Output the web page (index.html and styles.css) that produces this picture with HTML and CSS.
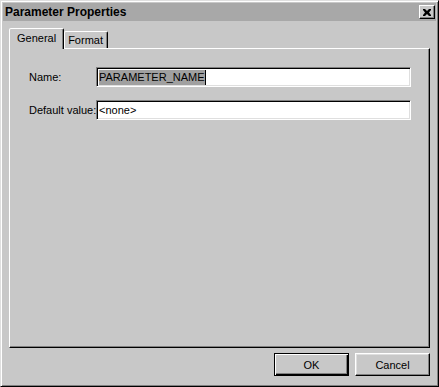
FILE: index.html
```html
<!DOCTYPE html>
<html lang="en">
<head>
    <meta charset="UTF-8">
    <link rel="stylesheet" href="styles.css">
    <title>Parameter Properties</title>
</head>
<body>
    <div class="window">
        <!-- title bar -->
        <div class="titlebar">
            <span class="title">Parameter Properties</span>
            <div class="close">
                <svg width="8" height="7" viewBox="0 0 8 7">
                    <path d="M0 0h2l2 2 2-2h2v1l-2 2.5 2 2.5v1h-2l-2-2-2 2h-2v-1l2-2.5-2-2.5z" fill="#000"/>
                </svg>
            </div>
        </div>

        <div class="content">
            <!-- tabs -->
            <div class="tabs">
                <div class="tab active">General</div>
                <div class="tab">Format</div>
            </div>

            <div class="panel">
                <div class="form">
                    <label class="lbl">Name:</label>
                    <div class="field"><span class="sel">PARAMETER_NAME</span><span class="caret"></span></div>
                    <label class="lbl">Default value:</label>
                    <div class="field">&lt;none&gt;</div>
                </div>
            </div>

            <div class="buttons">
                <div class="btn default"><span>OK</span></div>
                <div class="btn"><span>Cancel</span></div>
            </div>
        </div>
    </div>
</body>
</html>
```

FILE: styles.css
```css
body {
    margin: 0;
    font-family: "Liberation Sans", Arial, sans-serif;
    font-size: 11px;
    color: #000;
}
.window {
    width: 439px;
    height: 387px;
    box-sizing: border-box;
    padding: 2px;
    background-color: #c8c8c8;
    border: 1px solid;
    border-color: #dfdfdf #000 #000 #dfdfdf;
    box-shadow: inset 1px 1px #fff, inset -1px -1px #808080;
    display: flex;
    flex-direction: column;
}
.titlebar {
    height: 18px;
    background-color: #a8a8a8;
    display: flex;
    align-items: center;
    justify-content: space-between;
    padding: 0 1px 0 2px;
}
.title {
    font-weight: bold;
    font-size: 12px;
}
.close {
    width: 16px;
    height: 14px;
    box-sizing: border-box;
    background-color: #c8c8c8;
    border: 1px solid;
    border-color: #fff #000 #000 #fff;
    box-shadow: inset -1px -1px #808080;
    display: flex;
    align-items: center;
    justify-content: center;
}
.content {
    flex: 1;
    display: flex;
    flex-direction: column;
    padding: 7px 6px 0 6px;
}
.tabs {
    height: 20px;
    display: flex;
    align-items: flex-end;
}
.tab {
    height: 17px;
    box-sizing: border-box;
    padding: 1px 4px 0 3px;
    border: 1px solid;
    border-bottom: none;
    border-color: #fff #000 transparent #fff;
    border-radius: 2px 2px 0 0;
    box-shadow: inset -1px 0 #808080;
    line-height: 14px;
}
.tab.active {
    height: 21px;
    margin-bottom: -1px;
    padding: 2px 7px 0 7px;
    background-color: #c8c8c8;
    position: relative;
    z-index: 1;
}
.panel {
    flex: 1;
    border: 1px solid;
    border-color: #fff #000 #000 #fff;
    box-shadow: inset -1px -1px #808080;
    padding: 18px 18px 0 19px;
}
.form {
    display: grid;
    grid-template-columns: 67px 1fr;
    row-gap: 13px;
    align-items: center;
}
.lbl {
    white-space: nowrap;
}
.field {
    height: 20px;
    box-sizing: border-box;
    background-color: #fff;
    border: 1px solid;
    border-color: #808080 #fff #fff #808080;
    box-shadow: inset 1px 1px #000, inset -1px -1px #dfdfdf;
    padding: 2px 0 0 2px;
    line-height: 15px;
    display: flex;
    align-items: flex-start;
}
.sel {
    background-color: #a0a0a0;
}
.caret {
    width: 1px;
    height: 15px;
    background-color: #000;
}
.buttons {
    display: flex;
    justify-content: flex-end;
    gap: 6px;
    margin: 5px 0 8px 0;
}
.btn {
    width: 75px;
    height: 23px;
    box-sizing: border-box;
    border: 1px solid;
    border-color: #fff #000 #000 #fff;
    box-shadow: inset -1px -1px #808080, inset 1px 1px #dfdfdf;
    display: flex;
    align-items: center;
    justify-content: center;
}
.btn.default {
    border: 1px solid #000;
    box-shadow: inset 1px 1px #fff, inset -1px -1px #000, inset -2px -2px #808080;
}
```
